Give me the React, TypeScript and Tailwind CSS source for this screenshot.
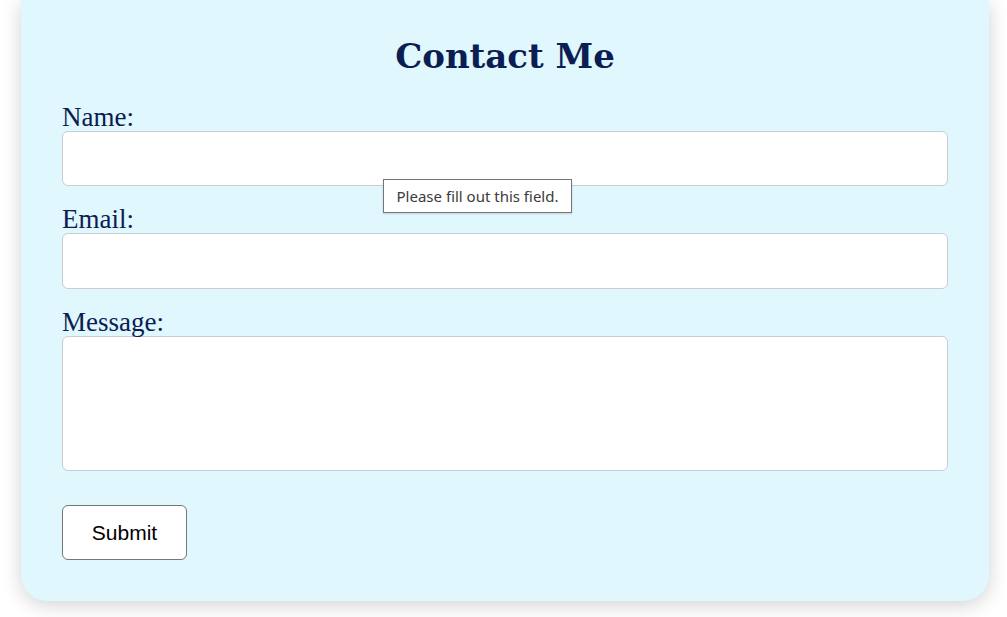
const labelCls =
  "block h-[28px] text-[27px] leading-[28px] text-[#0b1d52] [font-family:'Liberation_Serif',serif]";
const fieldCls =
  "block w-full rounded-[6px] border border-[#c9cdd1] bg-white outline-none";

export default function App() {
  return (
    <div className="min-h-[617px] w-full bg-white pl-[21px] pr-[18px] pb-[16px]">
      <div className="rounded-b-[26px] bg-[#dff7fd] px-[41px] pt-[36px] pb-[41px] shadow-[0_4px_20px_rgba(0,0,0,0.18)]">
        <h1 className="h-[40px] text-center text-[34px] font-bold leading-[40px] text-[#0b1d52] [font-family:'DejaVu_Serif',serif]">
          Contact Me
        </h1>
        <form className="mt-[27px]">
          <label className={labelCls}>Name:</label>
          <div className="relative">
            <input type="text" className={`${fieldCls} h-[55px]`} />
            <div className="absolute left-[321px] top-[48px] z-10 flex h-[34px] w-[189px] items-center justify-center border border-[#767676] bg-white text-[15px] text-[#3b3b3b] shadow-[0_1px_2px_rgba(0,0,0,0.15)] [font-family:'Noto_Sans',sans-serif]">
              Please fill out this field.
            </div>
          </div>
          <label className={`${labelCls} mt-[19px]`}>Email:</label>
          <input type="email" className={`${fieldCls} h-[56px]`} />
          <label className={`${labelCls} mt-[19px]`}>Message:</label>
          <textarea className={`${fieldCls} h-[135px] resize-none`} />
          <button
            type="button"
            className="mt-[34px] h-[55px] w-[125px] rounded-[6px] border border-[#767676] bg-white text-[21px] text-black [font-family:'Liberation_Sans',Arial,sans-serif]"
          >
            Submit
          </button>
        </form>
      </div>
    </div>
  );
}
